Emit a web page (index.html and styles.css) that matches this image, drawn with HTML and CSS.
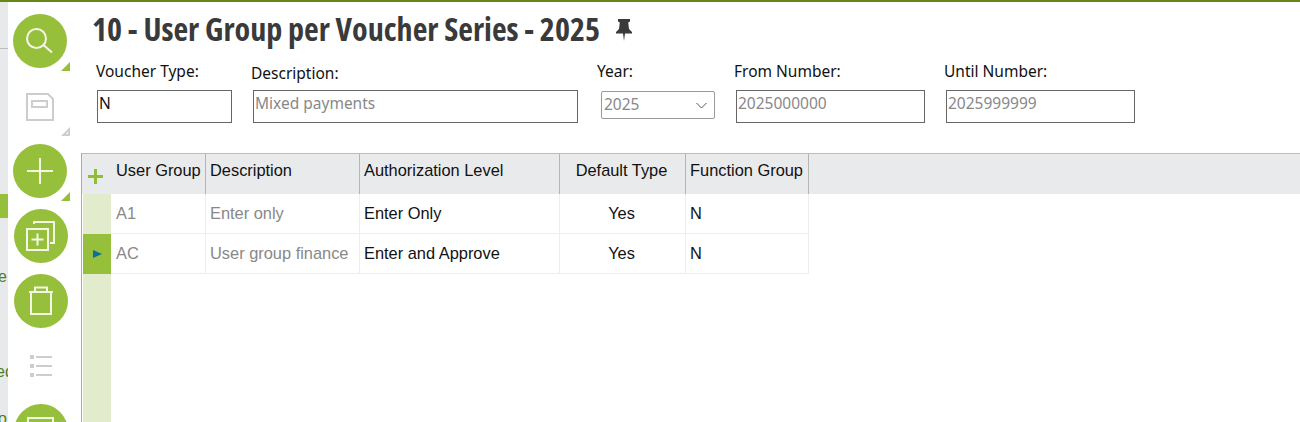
FILE: index.html
```html
<!DOCTYPE html>
<html lang="en">
<head>
  <meta charset="UTF-8" />
  <title>User Group per Voucher Series</title>
  <link rel="stylesheet" href="styles.css">
</head>
<body>
  <div class="page">
    <div class="strip">
      <div class="strip-head"></div>
      <div class="strip-active"></div>
      <div class="strip-text first">e</div>
      <div class="strip-text second">ed</div>
      <div class="strip-text third">o</div>
    </div>

    <div class="tools">
      <div class="tool">
        <svg class="disc" viewBox="0 0 54 54">
          <circle class="disc-bg" cx="27" cy="27" r="27"/>
          <circle class="glyph" cx="23.5" cy="24.5" r="9.5"/>
          <path class="glyph" d="M30.5 31 L39 38.5"/>
        </svg>
        <svg class="corner" viewBox="0 0 9 9"><path class="corner-on" d="M9 0 V9 H0 Z"/></svg>
      </div>
      <div class="tool">
        <svg class="disc" viewBox="0 0 54 54">
          <path class="glyph-off" d="M14 15 H35 L40 20 V41 H14 Z"/>
          <rect class="glyph-off" x="19" y="22" width="15" height="6"/>
        </svg>
        <svg class="corner" viewBox="0 0 9 9"><path class="corner-off" d="M8 2.5 V8 H2.5 Z"/></svg>
      </div>
      <div class="tool">
        <svg class="disc" viewBox="0 0 54 54">
          <circle class="disc-bg" cx="27" cy="27" r="27"/>
          <path class="glyph" d="M14 27 H40 M27 14 V40"/>
        </svg>
        <svg class="corner" viewBox="0 0 9 9"><path class="corner-on" d="M9 0 V9 H0 Z"/></svg>
      </div>
      <div class="tool shifted">
        <svg class="disc" viewBox="0 0 54 54">
          <circle class="disc-bg" cx="27" cy="27" r="27"/>
          <rect class="glyph" x="13" y="20" width="21" height="21"/>
          <path class="glyph" d="M20 15 V13 H40 V34 H36"/>
          <path class="glyph" d="M17.5 30.5 H29.5 M23.5 24.5 V36.5"/>
        </svg>
      </div>
      <div class="tool shifted">
        <svg class="disc" viewBox="0 0 54 54">
          <circle class="disc-bg" cx="27" cy="27" r="27"/>
          <path class="glyph" d="M15 18 H39 M21 18 V13.5 H33 V18"/>
          <rect class="glyph" x="17" y="18" width="20" height="22"/>
        </svg>
      </div>
      <div class="tool shifted">
        <svg class="disc" viewBox="0 0 54 54">
          <path class="list-dots" d="M16 16 h4 v4 h-4 Z M16 25 h4 v4 h-4 Z M16 34 h4 v4 h-4 Z"/>
          <path class="list-lines" d="M22 18 H38 M22 27 H38 M22 36 H38"/>
        </svg>
      </div>
      <div class="tool shifted">
        <svg class="disc" viewBox="0 0 54 54">
          <circle class="disc-bg" cx="27" cy="27" r="27"/>
          <rect class="glyph" x="14" y="14" width="25" height="20"/>
        </svg>
      </div>
    </div>

    <div class="main">
      <div class="title-row">
        <h1 class="title">10 - User Group per Voucher Series - 2025</h1>
        <svg class="pin" viewBox="0 0 16 22">
          <path d="M2 0 H14 V2.5 L12.2 3.5 L13 10 L16 13 V14.5 H9 L8 22 L7 14.5 H0 V13 L3 10 L3.8 3.5 L2 2.5 Z"/>
        </svg>
      </div>

      <div class="filters">
        <div class="field f-type">
          <label class="field-label">Voucher Type:</label>
          <div class="box active">N</div>
        </div>
        <div class="field f-desc">
          <label class="field-label low">Description:</label>
          <div class="box">Mixed payments</div>
        </div>
        <div class="field f-year">
          <label class="field-label">Year:</label>
          <div class="select">
            <span>2025</span>
            <svg class="chevron" viewBox="0 0 12 7"><path d="M1 1 L6 6 L11 1"/></svg>
          </div>
        </div>
        <div class="field f-num">
          <label class="field-label">From Number:</label>
          <div class="box">2025000000</div>
        </div>
        <div class="field f-num">
          <label class="field-label">Until Number:</label>
          <div class="box">2025999999</div>
        </div>
      </div>

      <div class="grid">
        <div class="grid-head">
          <div class="gutter-head">
            <svg class="add" viewBox="0 0 15 15"><path d="M7.5 0 V15 M0 7.5 H15"/></svg>
          </div>
          <div class="hcell c1">User Group</div>
          <div class="hcell c2">Description</div>
          <div class="hcell c3">Authorization Level</div>
          <div class="hcell c4 center">Default Type</div>
          <div class="hcell c5">Function Group</div>
        </div>
        <div class="grid-row">
          <div class="gutter"></div>
          <div class="cell c1 muted">A1</div>
          <div class="cell c2 muted">Enter only</div>
          <div class="cell c3">Enter Only</div>
          <div class="cell c4 center">Yes</div>
          <div class="cell c5">N</div>
        </div>
        <div class="grid-row">
          <div class="gutter current">
            <svg class="arrow" viewBox="0 0 9 8"><path d="M0 0 L9 4 L0 8 Z"/></svg>
          </div>
          <div class="cell c1 muted">AC</div>
          <div class="cell c2 muted">User group finance</div>
          <div class="cell c3">Enter and Approve</div>
          <div class="cell c4 center">Yes</div>
          <div class="cell c5">N</div>
        </div>
        <div class="gutter-rest"></div>
      </div>
    </div>
  </div>
</body>
</html>
```

FILE: styles.css
```css
html, body {
  margin: 0;
  height: 100%;
  overflow: hidden;
  background: #fff;
}
.page {
  display: flex;
  height: 422px;
  overflow: hidden;
  border-top: 2px solid #648717;
  box-sizing: border-box;
  font-family: "Liberation Sans", Arial, sans-serif;
  color: #111;
}

/* clipped menu behind the toolbar */
.strip {
  width: 8px;
  flex: none;
  background: #e8e9eb;
  overflow: hidden;
  display: flex;
  flex-direction: column;
  font-family: "Liberation Sans", sans-serif;
  font-size: 16px;
  color: #4d7c1e;
}
.strip-head {
  height: 46px;
  flex: none;
  border-bottom: 1px solid #bcbcbc;
}
.strip-active {
  height: 24px;
  flex: none;
  margin-top: 145px;
  background: #96bf3c;
}
.strip-text {
  height: 16px;
  line-height: 16px;
  flex: none;
  white-space: nowrap;
}
.strip-text.first { margin-top: 51px; margin-left: -2px; }
.strip-text.second { margin-top: 79px; margin-left: -4px; }
.strip-text.third { margin-top: 31px; margin-left: -2px; }

/* toolbar */
.tools {
  width: 72px;
  flex: none;
  padding-top: 12px;
  padding-left: 5px;
  box-sizing: border-box;
  display: flex;
  flex-direction: column;
  gap: 11px;
  overflow: hidden;
}
.tool {
  position: relative;
  width: 54px;
  height: 54px;
  flex: none;
}
.tool.shifted { margin-left: 1px; }
.disc {
  display: block;
  width: 54px;
  height: 54px;
}
.disc-bg { fill: #96bf3c; }
.glyph {
  fill: none;
  stroke: #f3f7e4;
  stroke-width: 2;
}
.glyph-off {
  fill: none;
  stroke: #cdcdcd;
  stroke-width: 2;
}
.list-dots { fill: #cdcdcd; }
.list-lines {
  fill: none;
  stroke: #cdcdcd;
  stroke-width: 2;
}
.corner {
  position: absolute;
  left: 48px;
  top: 48px;
  width: 9px;
  height: 9px;
}
.corner-on { fill: #96bf3c; }
.corner-off {
  fill: none;
  stroke: #cdcdcd;
  stroke-width: 2;
}

/* main */
.main {
  flex: 1;
  min-width: 0;
  display: flex;
  flex-direction: column;
}
.title-row {
  display: flex;
  align-items: center;
  gap: 16px;
  height: 56px;
  padding-left: 12px;
}
.title {
  margin: -4px 0 0;
  font-family: "Open Sans", sans-serif;
  font-stretch: 75%;
  font-size: 32.1px;
  font-weight: 700;
  color: #3a3a3a;
  white-space: nowrap;
}
.pin {
  width: 16px;
  height: 22px;
  fill: #3a3a3a;
  margin-top: 0;
}

.filters {
  display: flex;
  height: 95px;
  flex: none;
  padding-left: 17px;
  font-family: "Noto Sans", sans-serif;
}
.field {
  display: flex;
  flex-direction: column;
}
.field-label {
  height: 32px;
  margin-left: -1px;
  line-height: 27px;
  font-size: 15.5px;
  color: #111;
  white-space: nowrap;
}
.field-label.low { line-height: 30px; margin-left: -2px; }
.f-type { width: 135px; margin-right: 21px; }
.f-desc { width: 325px; margin-right: 23px; }
.f-year { width: 114px; margin-right: 21px; }
.f-num { width: 189px; margin-right: 21px; }
.f-year .field-label { margin-left: -4px; }
.f-num .field-label { margin-left: -2px; }

.box {
  height: 33px;
  box-sizing: border-box;
  border: 1px solid #666;
  padding: 1px 1px;
  line-height: 22px;
  font-size: 15.5px;
  color: #888;
}
.box.active { color: #111; }
.select {
  height: 28px;
  margin-top: 1px;
  box-sizing: border-box;
  border: 1px solid #999;
  border-radius: 2px;
  padding: 0 6px 2px 2px;
  display: flex;
  align-items: center;
  justify-content: space-between;
  font-size: 15.5px;
  color: #888;
}
.chevron {
  width: 13px;
  height: 7px;
  margin-top: 2px;
  fill: none;
  stroke: #555;
  stroke-width: 1;
}

/* grid */
.grid {
  flex: 1;
  margin-left: 1px;
  border-left: 1px solid #aaa;
  display: flex;
  flex-direction: column;
  font-size: 16.4px;
}
.grid-head {
  display: flex;
  height: 41px;
  flex: none;
  box-sizing: border-box;
  border-top: 1px solid #bcbcbc;
  background: #e9eaec;
}
.gutter-head {
  width: 29px;
  flex: none;
  display: flex;
  justify-content: center;
  padding: 15px 2px 0 0;
  box-sizing: border-box;
}
.add {
  width: 15px;
  height: 15px;
  fill: none;
  stroke: #8fbc3b;
  stroke-width: 3;
}
.hcell {
  flex: none;
  box-sizing: border-box;
  padding: 6px 0 0 4px;
  line-height: 20px;
  border-right: 1px solid #b5b5b5;
  white-space: nowrap;
}
.c1 { width: 95px; padding-left: 5px; }
.c2 { width: 154px; }
.c3 { width: 200px; }
.c4 { width: 126px; }
.c5 { width: 123px; }
.hcell.center { text-align: center; padding-left: 0; padding-right: 2px; }
.grid-row {
  display: flex;
  height: 40px;
  flex: none;
}
.gutter {
  width: 28px;
  margin-left: 1px;
  flex: none;
  background: #e2ebcb;
  display: flex;
  align-items: center;
  justify-content: center;
}
.gutter.current { background: #96bf3c; }
.arrow {
  width: 9px;
  height: 8px;
  fill: #0a6fa0;
  margin-left: 1px;
}
.cell {
  flex: none;
  box-sizing: border-box;
  padding-left: 4px;
  line-height: 39px;
  border-right: 1px solid #eee;
  border-bottom: 1px solid #eee;
  white-space: nowrap;
}
.cell.c1 { padding-left: 5px; }
.cell.center { text-align: center; padding-left: 0; padding-right: 2px; }
.muted { color: #888; }
.gutter-rest {
  width: 28px;
  margin-left: 1px;
  flex: 1;
  background: #e2ebcb;
}
```
